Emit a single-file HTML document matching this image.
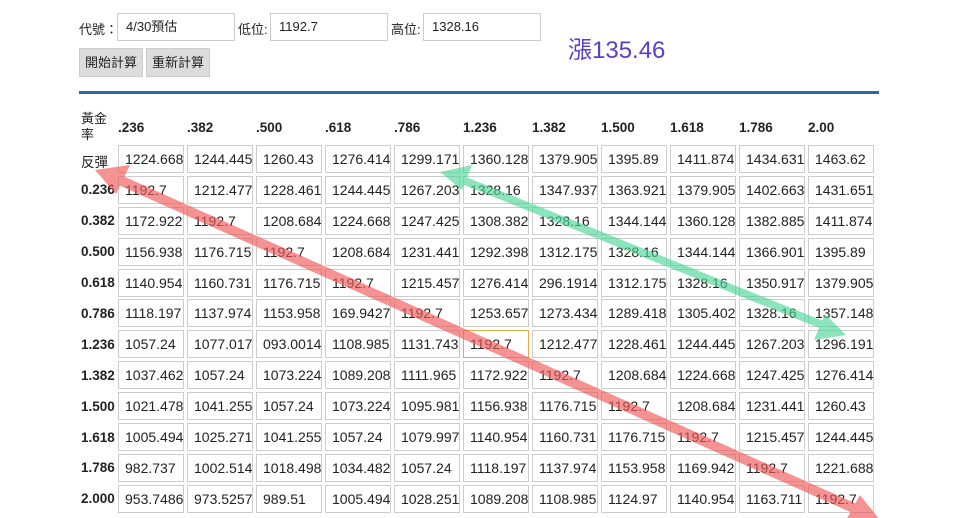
<!DOCTYPE html>
<html><head><meta charset="utf-8"><style>
*{margin:0;padding:0;box-sizing:border-box}
body{width:960px;height:518px;background:#fff;position:relative;overflow:hidden;font-family:"Liberation Sans","Noto Sans CJK TC",sans-serif;font-size:13px;color:#222}
.a{position:absolute;white-space:nowrap}
.in{position:absolute;height:28px;border:1px solid #ccc;padding-left:8px;line-height:26px;font-size:13px}
.btn{position:absolute;height:29px;background:#dcdcdc;border:1px solid #ccc;line-height:27px;padding:0 6px;font-size:13px;white-space:nowrap;text-align:center}
.g{position:absolute;left:118px;top:145px;display:grid;grid-template-columns:repeat(11,66px);column-gap:3px;grid-auto-rows:28px;row-gap:2.9px}
.g div{border:1px solid #ccc;padding-left:6px;line-height:26px;overflow:hidden;white-space:nowrap;font-size:14px}
.g div.o{border-color:#e2a84a}
.lab{position:absolute;left:81px;font-weight:bold;font-size:13.5px}
.h{position:absolute;top:120px;font-weight:bold;font-size:13.5px}
</style></head><body>
<div class="a" style="left:79px;top:19px">代號：</div>
<div class="in" style="left:117px;top:13px;width:118px">4/30預估</div>
<div class="a" style="left:238px;top:19px">低位:</div>
<div class="in" style="left:270px;top:13px;width:118px">1192.7</div>
<div class="a" style="left:391px;top:19px">高位:</div>
<div class="in" style="left:423px;top:13px;width:118px">1328.16</div>
<div class="btn" style="left:79px;top:48px;width:64px;padding:0">開始計算</div>
<div class="btn" style="left:146px;top:48px;width:64px;padding:0">重新計算</div>
<div class="a" style="left:568px;top:30px;font-size:24px;color:#5a3fc8">漲135.46</div>
<div class="a" style="left:79px;top:91px;width:800px;height:3px;background:#2b66a8"></div>
<div class="a" style="left:81px;top:111px;font-size:13px;line-height:16px">黃金<br>率</div>
<div class="h" style="left:118px">.236</div><div class="h" style="left:187px">.382</div><div class="h" style="left:256px">.500</div><div class="h" style="left:325px">.618</div><div class="h" style="left:394px">.786</div><div class="h" style="left:463px">1.236</div><div class="h" style="left:532px">1.382</div><div class="h" style="left:601px">1.500</div><div class="h" style="left:670px">1.618</div><div class="h" style="left:739px">1.786</div><div class="h" style="left:808px">2.00</div>
<div class="lab" style="top:151px;font-weight:normal">反彈</div>
<div class="lab" style="top:182px">0.236</div>
<div class="lab" style="top:213px">0.382</div>
<div class="lab" style="top:244px">0.500</div>
<div class="lab" style="top:275px">0.618</div>
<div class="lab" style="top:306px">0.786</div>
<div class="lab" style="top:337px">1.236</div>
<div class="lab" style="top:368px">1.382</div>
<div class="lab" style="top:399px">1.500</div>
<div class="lab" style="top:430px">1.618</div>
<div class="lab" style="top:460px">1.786</div>
<div class="lab" style="top:491px">2.000</div>
<div class="g">
<div>1224.668</div><div>1244.445</div><div>1260.43</div><div>1276.414</div><div>1299.171</div><div>1360.128</div><div>1379.905</div><div>1395.89</div><div>1411.874</div><div>1434.631</div><div>1463.62</div>
<div>1192.7</div><div>1212.477</div><div>1228.461</div><div>1244.445</div><div>1267.203</div><div>1328.16</div><div>1347.937</div><div>1363.921</div><div>1379.905</div><div>1402.663</div><div>1431.651</div>
<div>1172.922</div><div>1192.7</div><div>1208.684</div><div>1224.668</div><div>1247.425</div><div>1308.382</div><div>1328.16</div><div>1344.144</div><div>1360.128</div><div>1382.885</div><div>1411.874</div>
<div>1156.938</div><div>1176.715</div><div>1192.7</div><div>1208.684</div><div>1231.441</div><div>1292.398</div><div>1312.175</div><div>1328.16</div><div>1344.144</div><div>1366.901</div><div>1395.89</div>
<div>1140.954</div><div>1160.731</div><div>1176.715</div><div>1192.7</div><div>1215.457</div><div>1276.414</div><div>296.1914</div><div>1312.175</div><div>1328.16</div><div>1350.917</div><div>1379.905</div>
<div>1118.197</div><div>1137.974</div><div>1153.958</div><div>169.9427</div><div>1192.7</div><div>1253.657</div><div>1273.434</div><div>1289.418</div><div>1305.402</div><div>1328.16</div><div>1357.148</div>
<div>1057.24</div><div>1077.017</div><div>093.0014</div><div>1108.985</div><div>1131.743</div><div class="o">1192.7</div><div>1212.477</div><div>1228.461</div><div>1244.445</div><div>1267.203</div><div>1296.191</div>
<div>1037.462</div><div>1057.24</div><div>1073.224</div><div>1089.208</div><div>1111.965</div><div>1172.922</div><div>1192.7</div><div>1208.684</div><div>1224.668</div><div>1247.425</div><div>1276.414</div>
<div>1021.478</div><div>1041.255</div><div>1057.24</div><div>1073.224</div><div>1095.981</div><div>1156.938</div><div>1176.715</div><div>1192.7</div><div>1208.684</div><div>1231.441</div><div>1260.43</div>
<div>1005.494</div><div>1025.271</div><div>1041.255</div><div>1057.24</div><div>1079.997</div><div>1140.954</div><div>1160.731</div><div>1176.715</div><div>1192.7</div><div>1215.457</div><div>1244.445</div>
<div>982.737</div><div>1002.514</div><div>1018.498</div><div>1034.482</div><div>1057.24</div><div>1118.197</div><div>1137.974</div><div>1153.958</div><div>1169.942</div><div>1192.7</div><div>1221.688</div>
<div>953.7486</div><div>973.5257</div><div>989.51</div><div>1005.494</div><div>1028.251</div><div>1089.208</div><div>1108.985</div><div>1124.97</div><div>1140.954</div><div>1163.711</div><div>1192.7</div>
</div>
<svg class="a" style="left:0;top:0" width="960" height="518">
<g opacity="0.65">
<line x1="115" y1="178" x2="858" y2="510" stroke="#f05a5a" stroke-width="10"/>
<polygon points="95,170 130,165 116,194" fill="#f05a5a"/>
<polygon points="880,520 845,522 860,495" fill="#f05a5a"/>
<line x1="455" y1="177" x2="830" y2="328" stroke="#4fd69a" stroke-width="8"/>
<polygon points="440,172 472,165 462,190" fill="#4fd69a"/>
<polygon points="846,335 814,340 825,314" fill="#4fd69a"/>
</g>
</svg>
</body></html>
